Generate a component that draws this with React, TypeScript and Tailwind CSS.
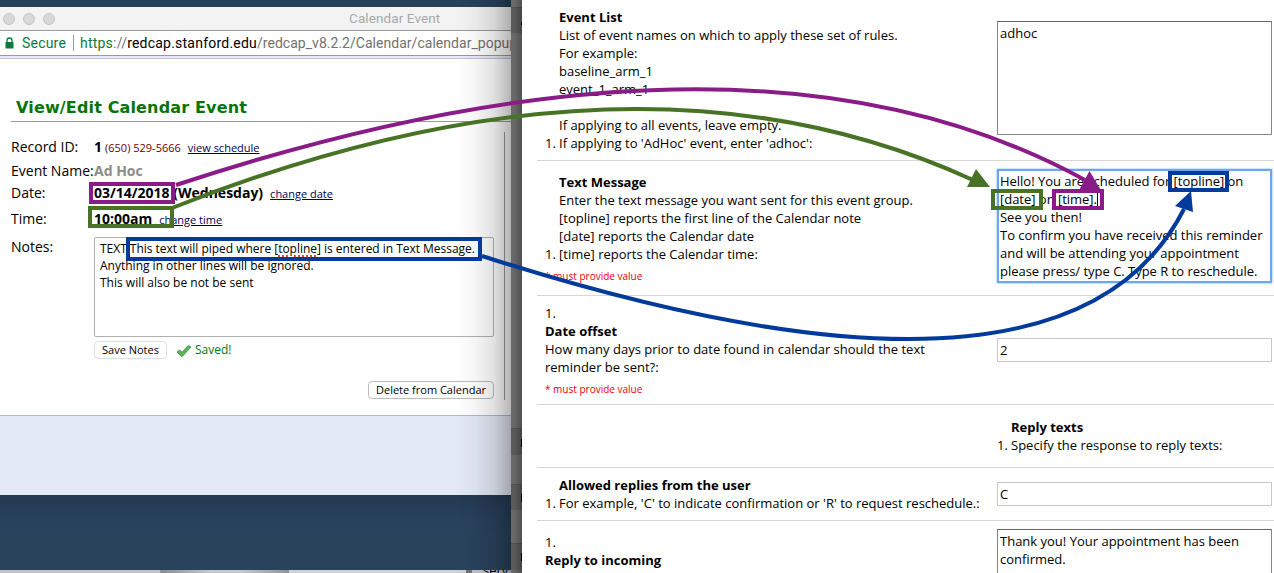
import React from "react";

function Field({ label, height, children }: { label: string; height: string; children: React.ReactNode }) {
  return (
    <div className={`flex items-baseline whitespace-nowrap pl-[11px] ${height}`}>
      <div className="w-[83px] shrink-0 text-[14px] leading-[20px]">{label}</div>
      {children}
    </div>
  );
}

function Line({ num, bold, children }: { num?: boolean; bold?: boolean; children?: React.ReactNode }) {
  return (
    <div className="flex h-[18px] whitespace-nowrap leading-[18px]">
      <span className="w-[14px] shrink-0">{num ? "1." : ""}</span>
      <span className={bold ? "font-bold" : ""}>{children}</span>
    </div>
  );
}

function CalendarWindow() {
  return (
    <div className="relative flex h-[573px] w-[511px] shrink-0 flex-col overflow-hidden bg-[#29435d]">
      <div className="h-[7px] shrink-0 bg-[#27415b]" />
      <div className="flex h-[24px] shrink-0 items-center gap-[8px] border-b border-[#9a9a9a] bg-[#f3f3f3] pl-[3px]">
        <i className="size-[12px] shrink-0 rounded-full border border-[#c6c6c6] bg-[#d8d8d8]" />
        <i className="size-[12px] shrink-0 rounded-full border border-[#c6c6c6] bg-[#d8d8d8]" />
        <i className="size-[12px] shrink-0 rounded-full border border-[#c6c6c6] bg-[#d8d8d8]" />
        <span className="ml-[286px] whitespace-nowrap font-['Roboto',sans-serif] text-[13.5px] tracking-[0.1px] text-[#a9a9a9]">Calendar Event</span>
      </div>
      <div className="flex h-[25px] shrink-0 items-center whitespace-nowrap border-b border-[#999] bg-white pl-[5px] font-['Roboto',sans-serif] text-[14px] text-[#727272]">
        <svg className="mr-[8px] h-[12px] w-[9px] shrink-0" viewBox="0 0 9 12">
          <rect x="0.5" y="5" width="8" height="6.5" rx="0.5" fill="#0b7a3c" />
          <path d="M2 6V3.5a2.5 2.5 0 0 1 5 0V6" fill="none" stroke="#0b7a3c" strokeWidth="1.3" />
        </svg>
        <span className="w-[51px] shrink-0 tracking-[0.2px] text-[#0b7a3c]">Secure</span>
        <i className="mr-[6px] h-[16px] w-px shrink-0 bg-[#999]" />
        <span className="shrink-0 tracking-[0.22px]"><span className="text-[#0b7a3c]">https</span>://<span className="text-black">redcap.stanford.edu</span><span className="tracking-[0.03px]">/redcap_v8.2.2/Calendar/calendar_popup</span></span>
      </div>
      <div className="h-[3px] shrink-0 border-b border-[#b9c3e3] bg-[#ececec]" />
      <div className="relative h-[357px] shrink-0 border-b border-[#a9b9dd] bg-white">
        <h1 className="ml-[11px] h-[63px] w-[500px] border-b border-[#999] pl-[5px] pt-[38px] font-['DejaVu_Sans',sans-serif] text-[16px] font-bold leading-[22px] tracking-[0.15px] text-[#077407]">View/Edit Calendar Event</h1>
        <div className="pt-[13px]">
          <Field label="Record ID:" height="h-[24px] pt-[2px]">
            <b className="text-[14px] leading-[20px]">1</b>
            <span className="ml-[3px] text-[11px] leading-[16px] text-[#700000]">(650) 529-5666</span>
            <span className="ml-[7px] text-[11px] leading-[16px] text-[#000055] underline">view schedule</span>
          </Field>
          <Field label="Event Name:" height="h-[23px] pt-[2px]">
            <b className="text-[14px] leading-[20px] text-[#8c8c8c]">Ad Hoc</b>
          </Field>
          <Field label="Date:" height="h-[22px] pt-[1px]">
            <b className="text-[14px] leading-[20px]">03/14/2018 (Wednesday)</b>
            <span className="ml-[7px] text-[11px] leading-[16px] text-[#000055] underline">change date</span>
          </Field>
          <Field label="Time:" height="h-[29px] pt-[5px]">
            <b className="text-[14px] leading-[20px]">10:00am</b>
            <span className="ml-[7px] text-[11px] leading-[16px] text-[#000055] underline">change time</span>
          </Field>
          <div className="flex pl-[11px] pt-[4px]">
            <div className="w-[83px] shrink-0 text-[14px] leading-[20px]">Notes:</div>
            <div className="h-[100px] w-[400px] whitespace-nowrap rounded-[2px] border border-[#b0b0b0] pl-[5px] pt-[2px] text-[12px] leading-[17px]">
              <div className="tracking-[-0.025px]">TEXT This text will piped where [<span className="underline decoration-[#ef4444] decoration-dotted decoration-2 underline-offset-2">topline</span>] is entered in Text Message.</div>
              <div>Anything in other lines will be ignored.</div>
              <div>This will also be not be sent</div>
            </div>
          </div>
          <div className="flex h-[26px] items-center pl-[94px]">
            <div className="h-[18px] w-[73px] rounded-[4px] border border-[#dedede] text-center text-[11px] leading-[16px]">Save Notes</div>
            <svg className="ml-[9px] mt-[2px] h-[14px] w-[16px]" viewBox="0 0 16 14">
              <path d="M1 8 L3.5 6 L6 8.3 L12.5 1.5 L15 3 L6 12.7 Z" fill="#57b957" stroke="#37863a" strokeWidth="0.8" />
            </svg>
            <span className="ml-[3px] text-[12px] text-[#077407]">Saved!</span>
          </div>
          <div className="flex justify-end pr-[17px] pt-[18px]">
            <div className="h-[18px] w-[126px] rounded-[4px] border border-[#bbb] text-center text-[11px] leading-[16px]">Delete from Calendar</div>
          </div>
        </div>
        <i className="absolute left-[504px] top-[73px] h-[268px] w-px bg-[#999]" />
      </div>
      <div className="h-[79px] shrink-0 bg-[#e3e9f5]" />
      <div className="h-[75px] shrink-0 rounded-bl-[4px] bg-[linear-gradient(#233950,#28405b_20px,#29435d_40px)]" />
      <div className="flex h-[3px] shrink-0 overflow-hidden bg-[#c5c3c5]">
        <i className="w-[161px] shrink-0 border-r border-[#999]" />
        <i className="w-[128px] shrink-0 bg-[linear-gradient(90deg,#8d8d8f,#c8c8c9_50px,#c8c8c9_80px,#929294)]" />
        <i className="w-[177px] shrink-0 bg-[#d2d1d3]" />
        <i className="w-[6px] shrink-0 bg-[#77716b]" />
        <span className="-mt-[7px] ml-[11px] text-[13px] leading-[14px]">serv</span>
      </div>
      <div className="absolute right-0 top-0 h-[573px] w-[56px] bg-[linear-gradient(90deg,transparent,rgba(0,0,0,.035)_35%,rgba(0,0,0,.12)_70%,rgba(0,0,0,.29))]" />
    </div>
  );
}

function Backdrop() {
  return (
    <div className="relative flex h-[573px] w-[11px] shrink-0 flex-col bg-[#696969]">
      <i className="h-[7px] bg-[#6b6b6b]" />
      <i className="h-[26px] border-t border-[#505050] bg-[#5b5b5b]" />
      <i className="h-[395px]" />
      <i className="h-[27px] border-t border-[#505050] bg-[#5b5b5b]" />
      <i className="h-[29px]" />
      <i className="h-[26px] border-t border-[#505050] bg-[#5b5b5b]" />
      <i className="h-[33px]" />
      <i className="h-[27px] border-t border-[#505050] bg-[#5b5b5b]" />
      <div className="absolute right-0 top-0 h-[573px] w-[8px] bg-[linear-gradient(90deg,transparent,rgba(0,0,0,.25))]" />
      <i className="absolute right-0 top-[439px] h-[8px] w-px bg-black" />
      <i className="absolute right-0 top-[494px] h-[8px] w-px bg-black" />
      <i className="absolute right-0 top-[553px] h-[8px] w-px bg-black" />
      <i className="absolute right-0 top-[22px] h-[3px] w-px bg-black" />
    </div>
  );
}

const row = "flex shrink-0 border-b border-[#d6d6d6]";
const left = "w-[460px] shrink-0 pl-[8px]";
const input = "h-[24px] w-[275px] border border-[#c8c8c8] pl-[2px] leading-[23px]";
const required = "pt-[4px] text-[10px] leading-[18px] text-[#f00000]";

function SurveyForm() {
  return (
    <div className="h-[573px] w-[752px] overflow-hidden bg-white pl-[15px] text-[13px] leading-[18px]">
      <div className={`${row} h-[161px]`}>
        <div className={`${left} pt-[8px]`}>
          <Line bold>Event List</Line>
          <Line>List of event names on which to apply these set of rules.</Line>
          <Line>For example:</Line>
          <Line>baseline_arm_1</Line>
          <Line>event_1_arm_1</Line>
          <Line />
          <Line>If applying to all events, leave empty.</Line>
          <Line num>If applying to 'AdHoc' event, enter 'adhoc':</Line>
        </div>
        <div className="mt-[21px] h-[114px] w-[275px] border border-[#888] border-t-[#666] pl-[2px] pt-[2px]">adhoc</div>
      </div>
      <div className={`${row} h-[135px]`}>
        <div className={`${left} pt-[12px]`}>
          <Line bold>Text Message</Line>
          <Line>Enter the text message you want sent for this event group.</Line>
          <Line>[topline] reports the first line of the Calendar note</Line>
          <Line>[date] reports the Calendar date</Line>
          <Line num>[time] reports the Calendar time:</Line>
          <div className={required}>* must provide value</div>
        </div>
        <div className="mt-[8px] h-[114px] w-[275px] whitespace-nowrap border-2 border-[#69a7ef] pl-px pt-px tracking-[-0.02px] shadow-[0_0_2px_#69a7ef]">
          <div>Hello! You are scheduled for [<span className="underline decoration-[#ef8888] decoration-dotted decoration-1 underline-offset-2">topline</span>] on</div>
          <div>[date] on [time].<i className="inline-block h-[13px] w-px bg-black align-[-2px]" /></div>
          <div>See you then!</div>
          <div>To confirm you have received this reminder</div>
          <div>and will be attending your appointment</div>
          <div>please press/ type C. Type R to reschedule.</div>
        </div>
      </div>
      <div className={`${row} h-[109px]`}>
        <div className={`${left} pt-[8px]`}>
          <div>1.</div>
          <div className="font-bold">Date offset</div>
          <div className="whitespace-nowrap">How many days prior to date found in calendar should the text</div>
          <div>reminder be sent?:</div>
          <div className={required}>* must provide value</div>
        </div>
        <div className={`${input} mt-[42px]`}>2</div>
      </div>
      <div className={`${row} h-[63px]`}>
        <div className={left} />
        <div className="pt-[13px]">
          <Line bold>Reply texts</Line>
          <Line num>Specify the response to reply texts:</Line>
        </div>
      </div>
      <div className={`${row} h-[53px]`}>
        <div className={`${left} pt-[8px]`}>
          <Line bold>Allowed replies from the user</Line>
          <Line num>For example, 'C' to indicate confirmation or 'R' to request reschedule.:</Line>
        </div>
        <div className={`${input} mt-[14px]`}>C</div>
      </div>
      <div className="flex h-[52px] overflow-hidden">
        <div className={`${left} pt-[12px]`}>
          <div>1.</div>
          <div className="font-bold">Reply to incoming</div>
        </div>
        <div className="mt-[8px] h-[114px] w-[275px] border border-[#888] border-t-[#666] pl-[2px] pt-[2px]">
          Thank you! Your appointment has been confirmed.
        </div>
      </div>
    </div>
  );
}

function Annotations() {
  return (
    <svg className="pointer-events-none absolute left-0 top-0" width="1274" height="573" viewBox="0 0 1274 573" fill="none">
      <g stroke="#8a1c88" strokeWidth="4">
        <path d="M176 185Q749 -4 1085 180" />
        <rect x="91" y="184" width="82" height="18" />
        <rect x="1054" y="191" width="48" height="17" />
      </g>
      <path d="M1102 192L1089.5 171L1078 192Z" fill="#8a1c88" />
      <g stroke="#487326" strokeWidth="4">
        <path d="M172 208Q635 25 973 180" />
        <rect x="90" y="208" width="82" height="18" />
        <rect x="993" y="191" width="48" height="17" />
      </g>
      <path d="M990 187L976 169L967 187Z" fill="#487326" />
      <g stroke="#003a9b" strokeWidth="4">
        <path d="M482 256Q1065 443 1184 209" />
        <rect x="128" y="239" width="352" height="20" />
        <rect x="1170" y="173" width="57" height="17" />
      </g>
      <path d="M1191 191L1175 206L1193 212Z" fill="#003a9b" />
    </svg>
  );
}

export default function App() {
  return (
    <div className="relative flex h-[573px] w-[1274px] overflow-hidden font-['Open_Sans',sans-serif] text-black">
      <CalendarWindow />
      <Backdrop />
      <SurveyForm />
      <Annotations />
    </div>
  );
}
